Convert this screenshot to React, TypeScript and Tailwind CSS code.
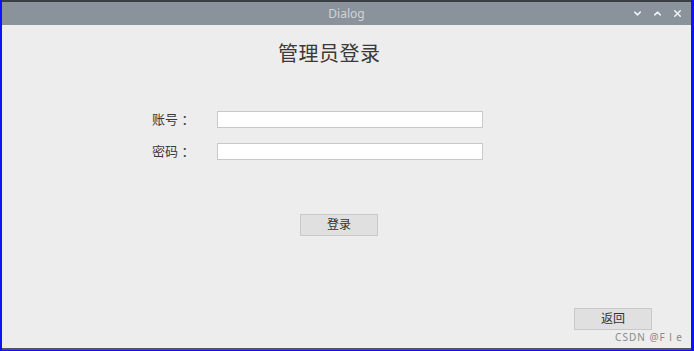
import { ChevronDown, ChevronUp, X } from "lucide-react";

const FONT = { fontFamily: '"Noto Sans", "Noto Sans CJK SC", sans-serif' };

export default function App() {
  return (
    <div className="w-[694px] h-[351px] bg-[#1010ff] pl-[2px] pr-[3px] pb-[1px]" style={FONT}>
      <div className="flex flex-col h-full bg-[#ededed] border-t-2 border-[#3a3f44] border-b-2 border-b-[#555]">
        {/* title bar */}
        <div className="relative h-[23px] bg-[#8a939b] flex items-center justify-center shrink-0">
          <span className="text-[12px] text-[#cfd3d7]">Dialog</span>
          <div className="absolute right-[8px] top-0 h-full flex items-center gap-[9px] text-[#eef0f2]">
            <ChevronDown size={11} strokeWidth={3.5} />
            <ChevronUp size={11} strokeWidth={3.5} />
            <X size={11} strokeWidth={3.5} />
          </div>
        </div>

        <div className="relative flex-1 flex flex-col">
          <h1 className="mt-[15px] ml-[276px] text-[20px] leading-[28px] text-[#3a3a3a] tracking-[0.5px]">管理员登录</h1>

          <div className="mt-[42px] flex flex-col gap-[12px] ml-[150px]">
            <div className="flex items-center">
              <span className="w-[65px] text-[13px] text-[#3a3a3a] whitespace-pre">账号 ：</span>
              <input className="w-[266px] h-[17px] bg-white border border-[#c8c8c8] outline-none" />
            </div>
            <div className="flex items-center">
              <span className="w-[65px] text-[13px] text-[#3a3a3a] whitespace-pre">密码 ：</span>
              <input className="w-[266px] h-[17px] bg-white border border-[#c8c8c8] outline-none" />
            </div>
          </div>

          <button className="mt-[53px] ml-[298px] w-[78px] h-[22px] bg-[#e0e0e0] border border-[#c8c8c8] text-[12px] text-[#333]">
            登录
          </button>

          <button className="mt-[72px] ml-[572px] w-[78px] h-[22px] bg-[#e0e0e0] border border-[#c8c8c8] text-[12px] text-[#333]">
            返回
          </button>

          <span className="absolute right-[8px] bottom-[3px] text-[10px] text-[#8a8a8a] tracking-[1px] whitespace-pre">CSDN @F l e</span>
        </div>
      </div>
    </div>
  );
}
